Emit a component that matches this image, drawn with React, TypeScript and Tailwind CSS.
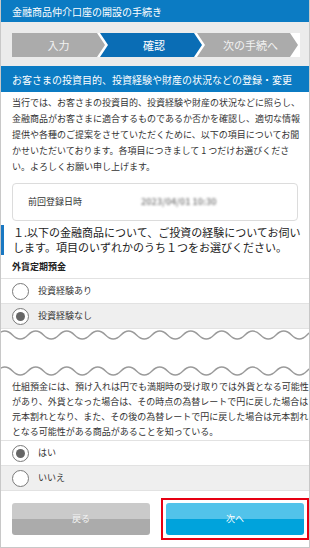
import React from 'react';

const font = { fontFamily: '"Noto Sans CJK JP", "Noto Sans", sans-serif' };

function wavePath(y: number) {
  let d = `M-4 ${y} q7.75 -8 15.5 0`;
  for (let i = 0; i < 22; i++) d += ' t15.5 0';
  return d;
}

function Radio({ checked }: { checked?: boolean }) {
  return (
    <span className="flex h-[17px] w-[17px] shrink-0 items-center justify-center rounded-full border border-[#7a7a7a] bg-white">
      {checked && <span className="h-[9px] w-[9px] rounded-full bg-[#666]" />}
    </span>
  );
}

function Option({ label, checked, shaded }: { label: string; checked?: boolean; shaded?: boolean }) {
  return (
    <div
      className={`flex h-[25px] items-center gap-[9px] border-b border-[#e2e2e2] pl-[11px] ${
        shaded ? 'bg-[#efefef]' : 'bg-white'
      }`}
    >
      <Radio checked={checked} />
      <span className="text-[9px] text-[#333]">{label}</span>
    </div>
  );
}

export default function App() {
  const steps = [
    { label: '入力', w: 'w-[93px]', bg: 'bg-[#ababab]', first: true },
    { label: '確認', w: 'w-[102px]', bg: 'bg-[#0a6db5]' },
    { label: '次の手続へ', w: 'w-[101px]', bg: 'bg-[#ababab]' },
  ];

  return (
    <div style={font} className="flex h-[548px] w-[310px] flex-col overflow-hidden border-x border-b border-[#c8c8c8] bg-white text-[#333]">
      {/* Header */}
      <div className="flex h-[22px] shrink-0 items-center bg-[#0b7bc3] pl-[11px] text-[10px] text-white">
        金融商品仲介口座の開設の手続き
      </div>

      {/* Steps */}
      <div className="shrink-0 bg-[#ebebeb] pb-[9px] pl-[11px] pt-[11px]">
        <div className="flex h-[24px] w-[288px] bg-white">
          {steps.map((s, i) => (
            <div
              key={s.label}
              className={`flex h-full items-center justify-center text-[11px] ${s.w} ${s.bg} ${
                i === 1 ? 'text-white' : 'text-[#f2f2f2]'
              } ${
                s.first
                  ? '[clip-path:polygon(0_0,calc(100%-8px)_0,100%_50%,calc(100%-8px)_100%,0_100%)]'
                  : '-ml-[5px] pl-[6px] [clip-path:polygon(0_0,calc(100%-8px)_0,100%_50%,calc(100%-8px)_100%,0_100%,8px_50%)]'
              }`}
            >
              {s.label}
            </div>
          ))}
        </div>
      </div>

      {/* Section title */}
      <div className="flex h-[26px] shrink-0 items-center bg-[#0b7bc3] pl-[11px] text-[10px] text-white">
        お客さまの投資目的、投資経験や財産の状況などの登録・変更
      </div>

      {/* Intro */}
      <div className="whitespace-nowrap pl-[11px] pt-[3px] text-[9px] leading-[16px]">
        <div>当行では、お客さまの投資目的、投資経験や財産の状況などに照らし、</div>
        <div>金融商品がお客さまに適合するものであるか否かを確認し、適切な情報</div>
        <div>提供や各種のご提案をさせていただくために、以下の項目についてお聞</div>
        <div>かせいただいております。各項目につきまして 1 つだけお選びくださ</div>
        <div>い。よろしくお願い申し上げます。</div>
      </div>

      {/* Last registered */}
      <div className="mx-[11px] mt-[8px] flex h-[38px] items-center rounded-[4px] border border-[#dcdcdc] pl-[15px] text-[9px]">
        <span className="w-[113px]">前回登録日時</span>
        <span className="font-bold text-[#8c8c8c] blur-[1px]">2023/04/01 10:30</span>
      </div>

      {/* Question */}
      <div className="mt-[4px] flex">
        <div className="w-[3px] shrink-0 bg-[#1a78c2]" />
        <div className="whitespace-nowrap pl-[9px] text-[11px] leading-[15px] text-[#222]">
          <div>１.以下の金融商品について、ご投資の経験についてお伺い</div>
          <div>します。項目のいずれかのうち１つをお選びください。</div>
        </div>
      </div>

      <div className="flex h-[23px] items-center pl-[11px] pt-[1px] text-[9px] font-bold text-[#222]">外貨定期預金</div>

      <div className="border-t border-[#e2e2e2]">
        <Option label="投資経験あり" />
        <Option label="投資経験なし" checked shaded />
      </div>

      {/* Omitted content marker */}
      <svg width="308" height="50" className="shrink-0">
        <path d={wavePath(6)} fill="none" stroke="#9a9a9a" strokeWidth="1.4" />
        <path d={wavePath(42)} fill="none" stroke="#9a9a9a" strokeWidth="1.4" />
      </svg>

      <div className="whitespace-nowrap pl-[11px] text-[9px] leading-[15px]">
        <div>仕組預金には、預け入れは円でも満期時の受け取りでは外貨となる可能性</div>
        <div>があり、外貨となった場合は、その時点の為替レートで円に戻した場合は</div>
        <div>元本割れとなり、また、その後の為替レートで円に戻した場合は元本割れ</div>
        <div>となる可能性がある商品があることを知っている。</div>
      </div>

      <div className="mt-[1px] border-t border-[#e2e2e2]">
        <Option label="はい" checked />
        <Option label="いいえ" shaded />
      </div>

      {/* Buttons */}
      <div className="flex items-center gap-[11px] pl-[11px] pt-[12px]">
        <button className="flex h-[32px] w-[138px] items-center justify-center rounded-[3px] bg-[linear-gradient(to_bottom,#cacaca_50%,#ababab_50%)] text-[9px] text-[#f4f4f4]">
          戻る
        </button>
        <div className="-my-[5px] border-2 border-[#e60012] p-[3px]">
          <button className="flex h-[32px] w-[138px] items-center justify-center rounded-[3px] bg-[linear-gradient(to_bottom,#52c3ea_50%,#00a3dc_50%)] text-[9px] text-white">
            次へ
          </button>
        </div>
      </div>
    </div>
  );
}
